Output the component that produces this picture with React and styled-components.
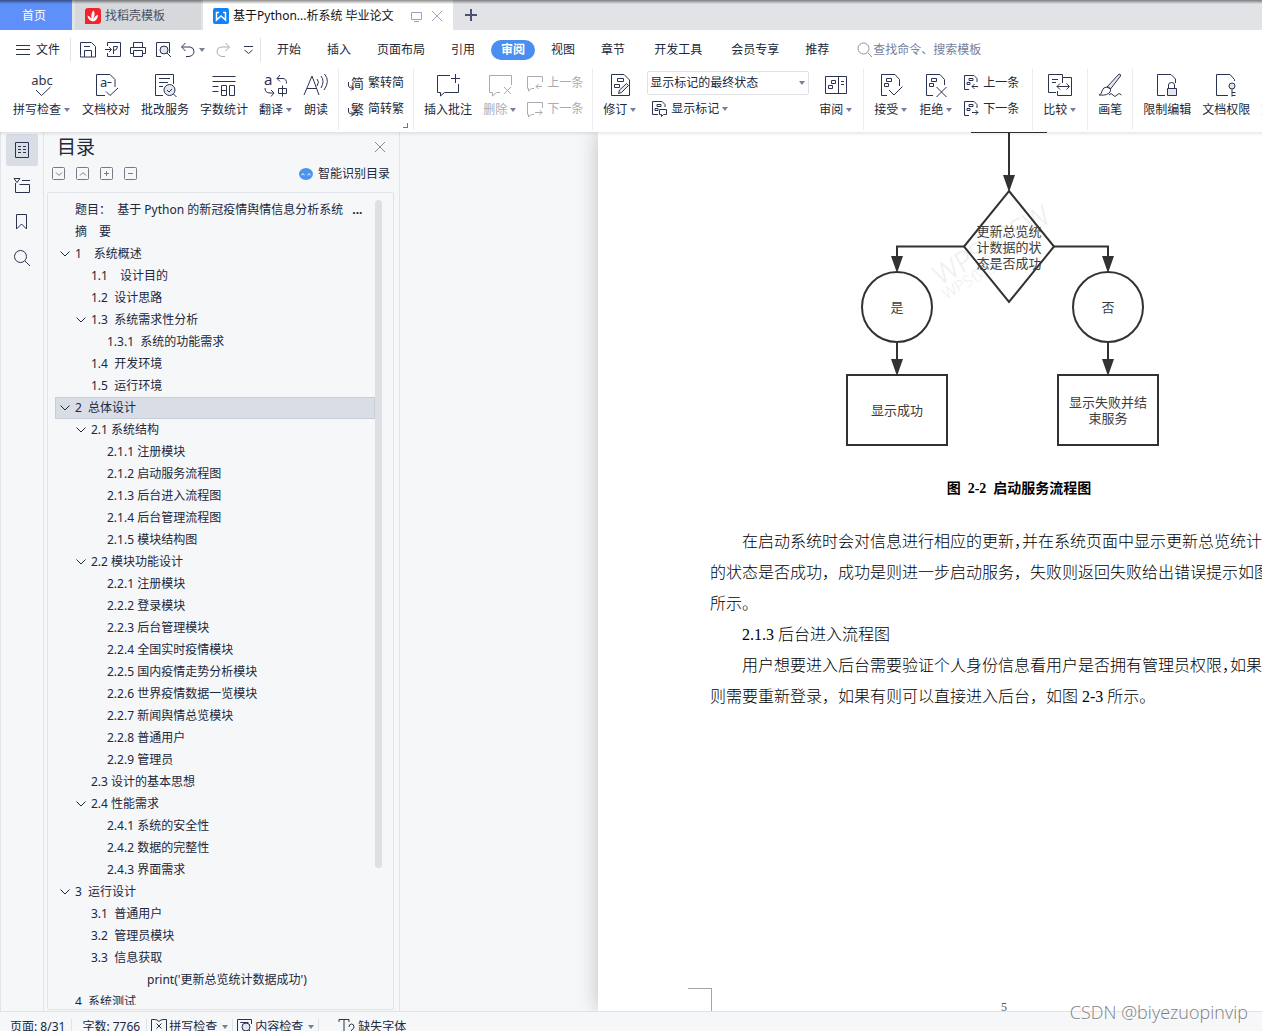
import React, { useState } from 'react';
import styled, { createGlobalStyle, css } from 'styled-components';

const INK = '#2b3350';
const MUTED = '#a9abb2';

const big = {
    spell: <>
        <path d="M6 17l5.500 5.500L20.500 14" />
        <text x="12" y="12" textAnchor="middle" fontSize="13" fill="currentColor" stroke="none">abc</text>
    </>,
    proof: <>
        <path d="M11 22.500H2.500V1.500H16l5 5V14M12 18.500l4 4 8-7.500" />
        <path d="M13.500 9.500h4" />
        <text x="6" y="14" fontSize="13" fill="currentColor" stroke="none">a</text>
    </>,
    correct: <>
        <path d="M10 22.500H2.500V1.500h18V11M6 5.500h11M6 9.500h9M6 13.500h4" />
        <circle cx="16.500" cy="17" r="5.500" fill="#e3e6ec" />
        <path d="M14 17l2 2 3-3M20.500 21l3 3" />
    </>,
    count: <>
        <path d="M.500 3.500h23M.500 8.500h23M.500 13.500h6M.500 18.500h6M9.500 12.500h5v10h-5zM17.500 12.500h5v10h-5zM9.500 17.500h5" />
    </>,
    translate: <>
        <text x="0" y="12" fontSize="15" fill="currentColor" stroke="none">a</text>
        <path d="M16 2l-3 3.500 3 3M13 5.500h6q3.500 0 3.500 5M1 15q0 5 5 5h3M7 17l3 3-3 3.500M14.500 15.500h8v5h-8zM18.500 12.500v11" />
    </>,
    read: <>
        <path d="M0 22L8 3l7 19M3 15.500h10M13 6q3 3 0 7M17 3q4 5 0 12M20.500 1q6 7-.500 16" />
    </>,
    comment: <>
        <path d="M14 2.500H1.500v17h3V23l4-3.500h14V11M19.500 1v9M15 5.500h9" />
    </>,
    remove: <>
        <path d="M12 19.500H8.500L4.500 23v-3.500h-3v-17h22V12M16 14l7 7M23 14l-7 7" />
    </>,
    revise: <>
        <path d="M3.500 1.500H16l5.500 5.500v15.500h-18z" />
        <path d="M9.500 5.500h6v3h-6zM6.500 11.500h5v3h-5z" />
        <path d="M10.500 20.500l1-3.500 7-6.500 2 2-7 7z" fill="#e3e6ec" />
    </>,
    pane: <>
        <path d="M1.500 3.500h21v17h-21zM14.500 3.500v17M17 8.500h3M17 11.500h3M7.500 7.500h4v3h-4zM4.500 12.500h4v3h-4z" />
    </>,
    accept: <>
        <path d="M8 22.500H2.500V1.500H16l4.500 5V13M7.500 5.500h5v3h-5zM5.500 10.500h4v3h-4zM10 17l5 5 8.500-8.500" />
    </>,
    reject: <>
        <path d="M9 22.500H2.500V1.500H16l4.500 5V12M7.500 5.500h5v3h-5zM5.500 10.500h4v3h-4zM12.500 14l10 10M22.500 14l-10 10" />
    </>,
    compare: <>
        <path d="M8 19.500H.500V1.500h14v3M4 6.500h6M4 9.500h4M14.500 8V4.500h9v18h-14V18M14.500 8v2M9 13.500h12M12 10.500l-3 3 3 3M18.500 10.500l3 3-3 3" />
    </>,
    pen: <>
        <path d="M9 14L21 1q2 0 1.500 2L12.500 16z" fill="#e3e6ec" />
        <path d="M9 14q4 0 3.500 4-2 5-11.500 4 3-1 3-4 1-4 5-4zM11 22q2-3 4 0t4 0 4.500 0" />
    </>,
    lock: <>
        <path d="M10 22.500H2.500V1.500H16l4.500 4.500v4M13.500 15v-3q0-2.500 3-2.500t3 2.500v3" />
        <path d="M12.500 15.500h9v7h-9z" fill="#e3e6ec" />
    </>,
    key: <>
        <path d="M14 22.500H2.500V1.500H16l4.500 5V8M18 16v7.500M18 19.500h3.500M18 22.500h3.500" />
        <circle cx="18" cy="13" r="3" fill="#e3e6ec" />
    </>,
};

const small = {
    save: <path d="M.500 13.500v-13h11l4 4v10.500H.500zM4.500 15V8.500h7V15M4 4.500h6" />,
    pdf: <path d="M2.500 4V.500h13v14h-13V11M0 7.500h6M4 5l2.500 2.500L4 10M8.500 12V4.500h4q0 4-4 4" />,
    print: <path d="M3.500 5V.500h9V5M3.500 11.500h-3v-6h15v6h-3M3.500 8.500h9v6h-9z" />,
    preview: <>
        <path d="M6 14.500H1.500V.500h13V11" />
        <circle cx="9" cy="8" r="4" fill="#e3e6ec" />
        <path d="M12 11l4 4" />
    </>,
    undo: <path d="M5.500 1L1.500 5l4 4M2 5h8q4 .500 4 4.500t-5 5H6" />,
    redo: <path d="M10.500 1l4 4-4 4M14 5H6Q2 5.500 2 9.500t5 5h3" />,
    more: <path d="M4 4.500h9M4.500 8l4 3.500 4-3.500" />,
    search: <path d="M6.500 1a5.500 5.500 0 1 0 0 11 5.500 5.500 0 1 0 0-11zM10.500 10.500L15 15" />,
    prev: <path d="M7 13.500H4.500L1.500 16v-2.500h-1v-12h15V7M15 11.500H9M11.500 9L9 11.500l2.500 2.500" />,
    next: <path d="M7 13.500H4.500L1.500 16v-2.500h-1v-12h15V7M8 11.500h7M12.500 9l2.500 2.500-2.500 2.500" />,
    prevMark: <path d="M6 14.500H1.500V.500H11l3 3V7M6 3.500h4v2H6zM4 7.500h3v2H4zM15 11.500H9M11.500 9L9 11.500l2.500 2.500" />,
    nextMark: <path d="M6 14.500H1.500V.500H11l3 3V7M6 3.500h4v2H6zM4 7.500h3v2H4zM9 11.500h6M12.500 9l2.500 2.500-2.500 2.500" />,
    marks: <path d="M7 13.500H1.500V.500H11l3 3V6M6 3.500h4v2H6zM4 7.500h3v2H4zM8.500 8.500h7v5h-3l-2 2v-2h-2z" />,
    outline: <path d="M1.500.500h13v15h-13zM4 4.500h3M9 4.500h3M4 7.500h3M9 7.500h3M4 10.500h3M9 10.500h3" />,
    chapters: <path d="M0 .500h6L3 4.500zM8 2.500h8M1.500 5v9.500h14v-8h-10" />,
    bookmark: <path d="M2.500.500h10V15L7.500 10l-5 5z" />,
    find: <path d="M6.500.500a6 6 0 1 0 0 12 6 6 0 1 0 0-12zM11 11l5 5" />,
    spellbook: <path d="M8 2.500q-2-2-4-2H.500v13h15V.500H12q-2 0-4 2M5.500 4.500l5 5M10.500 4.500l-5 5" />,
    content: <>
        <path d="M5 14.500H.500V.500h14V5M3.500 4V3.500h8" />
        <circle cx="9" cy="8" r="4" fill="#e3e6ec" />
        <path d="M12 11l3 3" />
    </>,
    missing: <path d="M0 .500h10M0 .500V3M10 .500V3M5 .500v13M3 13.500h4M10 8q0-3 2.500-3T15 8q0 2-2.500 3v1M12.500 13.500v1.500" />,
    screen: <path d="M2.500 4.500h10v7h-10zM5 13.500h5" />,
    close: <path d="M3 3l10 10M13 3L3 13" />,
};

function Icon({ name, size = 16 }) {
    const set = size === 24 ? big : small;
    return <Glyph width={size} height={size} viewBox={`0 0 ${size} ${size}`} aria-hidden="true">{set[name]}</Glyph>;
}

function Caret() {
    return <CaretSvg width="6" height="4" viewBox="0 0 6 4" aria-hidden="true"><path d="M0 0h6L3 4z" /></CaretSvg>;
}

function Tool({ icon, label, caret, disabled }) {
    return (
        <BigButton disabled={disabled}>
            <Icon name={icon} size={24} />
            <Label>{label}{caret && <Caret />}</Label>
        </BigButton>
    );
}

function Mini({ icon, label, caret, disabled, glyph }) {
    return (
        <MiniButton disabled={disabled}>
            {glyph
                ? <GlyphBox><ConvertArrow viewBox="0 0 6 9" width="6" height="9"><path d="M.500 0v4q0 2 4 2M3 3.500L5.500 6 3 8.500" /></ConvertArrow><b>{glyph}</b></GlyphBox>
                : <Icon name={icon} />}
            <Label>{label}{caret && <Caret />}</Label>
        </MiniButton>
    );
}

const toc = [
    [0, '题目：  基于 Python 的新冠疫情舆情信息分析系统', false, '...'],
    [0, '摘　要'],
    [0, '1　系统概述', true],
    [1, '1.1　设计目的'],
    [1, '1.2  设计思路'],
    [1, '1.3  系统需求性分析', true],
    [2, '1.3.1  系统的功能需求'],
    [1, '1.4  开发环境'],
    [1, '1.5  运行环境'],
    [0, '2  总体设计', true],
    [1, '2.1 系统结构', true],
    [2, '2.1.1 注册模块'],
    [2, '2.1.2 启动服务流程图'],
    [2, '2.1.3 后台进入流程图'],
    [2, '2.1.4 后台管理流程图'],
    [2, '2.1.5 模块结构图'],
    [1, '2.2 模块功能设计', true],
    [2, '2.2.1 注册模块'],
    [2, '2.2.2 登录模块'],
    [2, '2.2.3 后台管理模块'],
    [2, '2.2.4 全国实时疫情模块'],
    [2, '2.2.5 国内疫情走势分析模块'],
    [2, '2.2.6 世界疫情数据一览模块'],
    [2, '2.2.7 新闻舆情总览模块'],
    [2, '2.2.8 普通用户'],
    [2, '2.2.9 管理员'],
    [1, '2.3 设计的基本思想'],
    [1, '2.4 性能需求', true],
    [2, '2.4.1 系统的安全性'],
    [2, '2.4.2 数据的完整性'],
    [2, '2.4.3 界面需求'],
    [0, '3  运行设计', true],
    [1, '3.1  普通用户'],
    [1, '3.2  管理员模块'],
    [1, '3.3  信息获取'],
    [4.5, "print('更新总览统计数据成功')"],
    [0, '4  系统测试'],
];

const menu = ['开始', '插入', '页面布局', '引用', '审阅', '视图', '章节', '开发工具', '会员专享', '推荐'];
const pluginTabs = ['开发工具', '会员专享'];

function FlowChart() {
    return (
        <Chart width="314" height="316" viewBox="0 0 314 316" role="img" aria-label="启动服务流程图">
            <g className="mark">
                <text transform="translate(94 154) rotate(-30)" fontSize="28">WPS VIEW</text>
                <text transform="translate(100 168) rotate(-30)" fontSize="16">WPS仅供</text>
            </g>
            <g className="shape">
                <path d="M125 0h76M163 0v44M118 114.500H51V126M208 114.500h54V126M51 211v18M262 211v18" />
                <path d="M163 59l45 55.500-45 55.500-45-55.500z" />
                <circle cx="51" cy="175" r="35" />
                <circle cx="262" cy="175" r="35" />
                <path d="M1 243h100v70H1zM212 243h100v70H212z" />
            </g>
            <path className="head" d="M157 43h12l-6 17zM45 124h12l-6 17zM256 124h12l-6 17zM45 227h12l-6 17zM256 227h12l-6 17z" />
            <g className="words">
                <text x="163" y="104">更新总览统</text>
                <text x="163" y="120">计数据的状</text>
                <text x="163" y="136">态是否成功</text>
                <text x="51" y="180">是</text>
                <text x="262" y="180">否</text>
                <text x="51" y="283">显示成功</text>
                <text x="262" y="275">显示失败并结</text>
                <text x="262" y="291">束服务</text>
            </g>
        </Chart>
    );
}

export default function App() {
    const [tab, setTab] = useState('审阅');
    const [selected, setSelected] = useState(9);

    return (
        <>
            <GlobalStyle />
            <Window>
                <TabBar>
                    <HomeTab>首页</HomeTab>
                    <DocTab $width={126}>
                        <svg width="16" height="16" viewBox="0 0 16 16" aria-hidden="true">
                            <path d="M3 0h10q3 0 3 3v10q0 3-3 3H0V3q0-3 3-3z" fill="#f5222d" />
                            <path d="M8 13.500Q3 12.500 2.500 7.500 5 8 6.500 11 5.500 5 8.500 2.500q2.500 3-.500 8.500Q10 7.500 13 6.500 13 12.500 8 13.500z" fill="#fff" />
                        </svg>
                        找稻壳模板
                    </DocTab>
                    <DocTab $width={250} $active>
                        <svg width="16" height="16" viewBox="0 0 16 16" aria-hidden="true">
                            <rect width="16" height="16" rx="2" fill="#1283f7" />
                            <path d="M3.500 4v8L8 8l4.500 4V4M3 4.500h3M10 4.500h3" fill="none" stroke="#fff" strokeWidth="1.500" />
                        </svg>
                        <span>基于Python...析系统 毕业论文</span>
                        <TabTools>
                            <Icon name="screen" />
                            <Icon name="close" />
                        </TabTools>
                    </DocTab>
                    <NewTab aria-label="新建">
                        <svg width="12" height="12" viewBox="0 0 12 12"><path d="M6 0v12M0 6h12" stroke="#4a5470" strokeWidth="2" /></svg>
                    </NewTab>
                </TabBar>

                <MenuRow>
                    <FileButton>
                        <svg width="14" height="12" viewBox="0 0 14 12"><path d="M0 1.500h14M0 5.500h14M0 10.500h14" stroke={INK} /></svg>
                        文件
                    </FileButton>
                    <QuickTools>
                        <button aria-label="保存"><Icon name="save" /></button>
                        <button aria-label="输出为PDF"><Icon name="pdf" /></button>
                        <button aria-label="打印"><Icon name="print" /></button>
                        <button aria-label="打印预览"><Icon name="preview" /></button>
                        <button aria-label="撤销"><Icon name="undo" /><Caret /></button>
                        <button aria-label="恢复" disabled><Icon name="redo" /></button>
                        <button aria-label="更多"><Icon name="more" /></button>
                    </QuickTools>
                    <MenuTabs>
                        {menu.map(name => (
                            <MenuTab
                                key={name}
                                $active={name === tab}
                                $plugin={pluginTabs.includes(name)}
                                onClick={() => setTab(name)}
                            >{name}</MenuTab>
                        ))}
                    </MenuTabs>
                    <SearchBox>
                        <Icon name="search" />
                        <input aria-label="搜索" placeholder="查找命令、搜索模板" />
                    </SearchBox>
                </MenuRow>

                <Ribbon>
                    <Group $first>
                        <Tool icon="spell" label="拼写检查" caret />
                        <Tool icon="proof" label="文档校对" />
                        <Tool icon="correct" label="批改服务" />
                        <Tool icon="count" label="字数统计" />
                        <Tool icon="translate" label="翻译" caret />
                        <Tool icon="read" label="朗读" />
                    </Group>
                    <Group>
                        <MiniColumn>
                            <Mini glyph="简" label="繁转简" />
                            <Mini glyph="繁" label="简转繁" />
                        </MiniColumn>
                        <Launcher />
                    </Group>
                    <Group>
                        <Tool icon="comment" label="插入批注" />
                        <Tool icon="remove" label="删除" caret disabled />
                        <MiniColumn>
                            <Mini icon="prev" label="上一条" disabled />
                            <Mini icon="next" label="下一条" disabled />
                        </MiniColumn>
                    </Group>
                    <Group>
                        <Tool icon="revise" label="修订" caret />
                        <MiniColumn>
                            <SelectWrap>
                                <select aria-label="标记显示状态" defaultValue="final">
                                    <option value="final">显示标记的最终状态</option>
                                    <option value="clean">最终状态</option>
                                </select>
                                <Caret />
                            </SelectWrap>
                            <MiniIndent><Mini icon="marks" label="显示标记" caret /></MiniIndent>
                        </MiniColumn>
                        <Tool icon="pane" label="审阅" caret />
                    </Group>
                    <Group $wide>
                        <Tool icon="accept" label="接受" caret />
                        <Tool icon="reject" label="拒绝" caret />
                        <MiniColumn>
                            <Mini icon="prevMark" label="上一条" />
                            <Mini icon="nextMark" label="下一条" />
                        </MiniColumn>
                    </Group>
                    <Group>
                        <Tool icon="compare" label="比较" caret />
                    </Group>
                    <Group>
                        <Tool icon="pen" label="画笔" />
                    </Group>
                    <Group>
                        <Tool icon="lock" label="限制编辑" />
                        <Tool icon="key" label="文档权限" />
                        <Tool label="文档认证" />
                    </Group>
                </Ribbon>

                <Body>
                    <Rail>
                        <RailButton $active aria-label="目录"><Icon name="outline" /></RailButton>
                        <RailButton aria-label="章节"><Icon name="chapters" /></RailButton>
                        <RailButton aria-label="书签"><Icon name="bookmark" /></RailButton>
                        <RailButton aria-label="查找"><Icon name="find" /></RailButton>
                    </Rail>

                    <Side>
                        <SideHead>
                            <h2>目录</h2>
                            <button aria-label="关闭"><Icon name="close" /></button>
                        </SideHead>
                        <SideTools>
                            {['M4 5.500l3 3 3-3', 'M4 8.500l3-3 3 3', 'M4 6.500h5M6.500 4v5', 'M4 6.500h5'].map(d => (
                                <button key={d} aria-label="层级">
                                    <svg width="14" height="14" viewBox="0 0 14 14"><path d={`M.500 1.500q0-1 1-1h10q1 0 1 1v10q0 1-1 1h-10q-1 0-1-1z${d}`} /></svg>
                                </button>
                            ))}
                            <SmartLink href="#toc">
                                <svg width="14" height="12" viewBox="0 0 14 12">
                                    <ellipse cx="7" cy="6" rx="7" ry="6" fill="#4a96ef" />
                                    <path d="M2.500 7q1.500-2.500 3 0M8.500 7q1.500-2.500 3 0" fill="none" stroke="#fff" />
                                </svg>
                                智能识别目录
                            </SmartLink>
                        </SideTools>
                        <TocBox id="toc">
                            <TocList>
                                {toc.map(([level, text, open, more], i) => (
                                    <li key={text}>
                                        <TocRow $level={level} $active={i === selected} onClick={() => setSelected(i)}>
                                            <Twist>{open && <svg width="10" height="6" viewBox="0 0 10 6"><path d="M.500 .500L5 5 9.500.500" /></svg>}</Twist>
                                            {text}
                                            {more && <b>{more}</b>}
                                        </TocRow>
                                    </li>
                                ))}
                            </TocList>
                            <ScrollThumb />
                        </TocBox>
                    </Side>

                    <Canvas>
                        <Page>
                            <FlowChart />
                            <Caption>图&nbsp; 2-2&nbsp; 启动服务流程图</Caption>
                            <Text>
                                在启动系统时会对信息进行相应的更新<Half>，</Half>并在系统页面中显示更新总览统计<br />
                                的状态是否成功，成功是则进一步启动服务，失败则返回失败给出错误提示如图<br />
                                所示。
                            </Text>
                            <Text>2.1.3 后台进入流程图</Text>
                            <Text>
                                用户想要进入后台需要验证个人身份信息看用户是否拥有管理员权限<Half>，</Half>如果<br />
                                则需要重新登录，如果有则可以直接进入后台，如图 2-3 所示。
                            </Text>
                            <PageFoot>
                                <Corner />
                                <span>5</span>
                            </PageFoot>
                        </Page>
                    </Canvas>
                </Body>

                <StatusBar>
                    <Status>页面: 8/31</Status>
                    <Status>字数: 7766</Status>
                    <Status as="button" $tight><Icon name="spellbook" />拼写检查<Caret /></Status>
                    <Status as="button" $tight><Icon name="content" />内容检查<Caret /></Status>
                    <Status as="button" $last><Icon name="missing" />缺失字体</Status>
                </StatusBar>
                <Credit>CSDN @biyezuopinvip</Credit>
            </Window>
        </>
    );
}

const GlobalStyle = createGlobalStyle`
    * { box-sizing: border-box; }
    body {
        margin: 0;
        color: #20283c;
        font: 12px/16px "Noto Sans", "Noto Sans CJK SC", sans-serif;
    }
    button {
        padding: 0;
        border: 0;
        background: none;
        color: inherit;
        font: inherit;
        white-space: nowrap;
    }
    a { color: inherit; text-decoration: none; }
`;
const Window = styled.div`
    position: relative;
    display: flex;
    flex-direction: column;
    height: 100vh;
    overflow: hidden;
    background: #fff;
`;
const Glyph = styled.svg`
    flex: none;
    display: block;
    fill: none;
    stroke: currentColor;
    color: ${INK};
    overflow: visible;
    button:disabled & { color: ${MUTED}; }
`;
const CaretSvg = styled.svg`
    flex: none;
    margin: 0 1px 0 3px;
    fill: #77809a;
`;

const TabBar = styled.header`
    position: relative;
    display: flex;
    flex: none;
    height: 30px;
    background: #e1e3e7;
    &::after {
        content: '';
        position: absolute;
        inset: 0 0 auto;
        height: 4px;
        background: linear-gradient(rgba(0, 0, 0, .45), rgba(0, 0, 0, 0));
    }
`;
const HomeTab = styled.button`
    width: 72px;
    margin-right: 3px;
    padding: 1px 4px 0 0;
    background: #5f8ff9;
    color: #fff;
`;
const DocTab = styled.div`
    display: flex;
    align-items: center;
    gap: 4px;
    width: ${p => p.$width}px;
    margin-right: ${p => p.$active ? 0 : 2}px;
    padding: 1px 8px 0 10px;
    background: ${p => p.$active ? '#fff' : '#d6d8dc'};
    color: ${p => p.$active ? '#111' : '#4a5060'};
    white-space: nowrap;
`;
const TabTools = styled.div`
    display: flex;
    gap: 4px;
    margin-left: auto;
    ${Glyph} { color: #98a2b8; }
`;
const NewTab = styled.button`
    display: flex;
    align-items: center;
    padding: 0 12px;
`;

const MenuRow = styled.nav`
    display: flex;
    align-items: center;
    flex: none;
    height: 39px;
`;
const FileButton = styled.button`
    display: flex;
    align-items: center;
    gap: 6px;
    height: 24px;
    padding: 0 10px 0 16px;
    border-right: 1px solid #e1e3e7;
`;
const QuickTools = styled.div`
    display: flex;
    align-items: center;
    gap: 9px;
    height: 24px;
    padding: 0 4px 0 9px;
    border-right: 1px solid #e1e3e7;
    button { display: flex; align-items: center; }
`;
const MenuTabs = styled.div`
    display: flex;
    gap: 6px;
    padding: 0 18px 0 6px;
`;
const MenuTab = styled.button`
    height: 20px;
    margin-left: ${p => p.$plugin ? 3 : 0}px;
    padding: 0 10px;
    border-radius: 10px;
    ${p => p.$active && css`
        background: #4a8ff0;
        color: #fff;
        font-weight: 700;
    `}
`;
const SearchBox = styled.label`
    display: flex;
    align-items: center;
    flex: 1;
    ${Glyph} { color: #8b93a8; }
    input {
        flex: 1;
        min-width: 0;
        padding: 0;
        border: 0;
        outline: 0;
        font: inherit;
        &::placeholder { color: #75809a; }
    }
`;

const Ribbon = styled.div`
    display: flex;
    flex: none;
    height: 63px;
    overflow: hidden;
    background: #fff;
`;
const Group = styled.div`
    position: relative;
    display: flex;
    align-items: flex-start;
    flex: none;
    gap: 11px;
    height: 61px;
    padding: 2px ${p => p.$wide ? 14 : 10}px 0 ${p => p.$first ? 13 : 10}px;
    border-right: 1px solid #ececef;
`;
const BigButton = styled.button`
    display: flex;
    flex-direction: column;
    align-items: center;
    gap: 5px;
    padding-top: 2px;
    &:disabled { color: ${MUTED}; }
`;
const Label = styled.span`
    display: flex;
    align-items: center;
`;
const MiniColumn = styled.div`
    display: flex;
    flex-direction: column;
    gap: 2px;
    margin: 0 -1px;
`;
const MiniButton = styled.button`
    display: flex;
    align-items: center;
    gap: 4px;
    height: 24px;
    &:disabled { color: ${MUTED}; }
`;
const MiniIndent = styled.div`
    padding-left: 4px;
`;
const GlyphBox = styled.span`
    display: flex;
    align-items: center;
    width: 16px;
    b { font-weight: 400; font-size: 13px; margin-left: -3px; }
`;
const ConvertArrow = styled.svg`
    flex: none;
    align-self: flex-end;
    fill: none;
    stroke: ${INK};
`;
const Launcher = styled.span`
    position: absolute;
    right: 5px;
    bottom: 2px;
    width: 5px;
    height: 5px;
    border: solid #6d7690;
    border-width: 0 1px 1px 0;
`;
const SelectWrap = styled.div`
    position: relative;
    select {
        display: block;
        width: 162px;
        height: 24px;
        padding: 0 16px 0 2px;
        border: 1px solid #dfe1e6;
        border-radius: 2px;
        appearance: none;
        background: #fff;
        color: inherit;
        font: inherit;
    }
    ${CaretSvg} {
        position: absolute;
        top: 10px;
        right: 3px;
    }
`;

const Body = styled.main`
    display: flex;
    flex: 1;
    min-height: 0;
    background: #f6f7f9;
    position: relative;
    &::before {
        content: '';
        position: absolute;
        z-index: 1;
        inset: 0 0 auto;
        height: 4px;
        background: linear-gradient(rgba(0, 0, 0, .09), rgba(0, 0, 0, 0));
    }
`;
const Rail = styled.aside`
    display: flex;
    flex-direction: column;
    align-items: center;
    gap: 4px;
    flex: none;
    width: 44px;
    padding-top: 2px;
    border: solid #e1e4e9;
    border-width: 0 1px;
`;
const RailButton = styled.button`
    display: grid;
    place-items: center;
    width: 32px;
    height: 32px;
    border-radius: 2px;
    background: ${p => p.$active ? '#d9dee6' : 'none'};
`;
const Side = styled.section`
    display: flex;
    flex-direction: column;
    flex: none;
    width: 356px;
    padding: 2px 5px 1px 3px;
    border-right: 1px solid #e1e4e9;
`;
const SideHead = styled.div`
    display: flex;
    align-items: center;
    justify-content: space-between;
    padding: 0 6px 0 10px;
    h2 {
        margin: 0;
        font-size: 19px;
        font-weight: 400;
        line-height: 26px;
    }
    ${Glyph} { color: #858b99; }
`;
const SideTools = styled.div`
    display: flex;
    align-items: center;
    gap: 10px;
    height: 28px;
    padding: 0 4px 0 5px;
    button { display: flex; }
    button svg { fill: none; stroke: #767b88; }
`;
const SmartLink = styled.a`
    display: flex;
    align-items: center;
    gap: 5px;
    margin-left: auto;
`;
const TocBox = styled.div`
    display: flex;
    align-items: flex-start;
    flex: 1;
    min-height: 0;
    margin-top: 4px;
    padding: 6px 11px 4px 7px;
    border: 1px solid #e1e4e9;
    border-radius: 2px;
`;
const TocList = styled.ul`
    flex: 1;
    align-self: stretch;
    overflow: hidden;
    margin: 0;
    padding: 0;
    list-style: none;
`;
const TocRow = styled.button`
    display: flex;
    align-items: center;
    width: 100%;
    height: 22px;
    padding-left: ${p => 5 + p.$level * 16}px;
    white-space: pre;
    ${p => p.$active && css`
        background: #d9dee6;
        outline: 1px solid #c8ced8;
        outline-offset: -1px;
    `}
    b { margin-left: 9px; }
`;
const Twist = styled.span`
    display: flex;
    width: 15px;
    svg { fill: none; stroke: #20283c; }
`;
const ScrollThumb = styled.div`
    width: 7px;
    height: 668px;
    max-height: 100%;
    margin-top: 1px;
    border-radius: 4px;
    background: #dddfe2;
`;

const Canvas = styled.section`
    flex: 1;
    min-width: 0;
    overflow: hidden;
    padding-left: 198px;
`;
const Page = styled.article`
    display: flex;
    flex-direction: column;
    width: 810px;
    height: 100%;
    padding: 0 112px;
    background: #fff;
    box-shadow: 0 0 20px rgba(0, 0, 0, .22);
    color: #000;
    font-family: "Liberation Serif", "Noto Sans CJK SC", serif;
`;
const Chart = styled.svg`
    flex: none;
    align-self: center;
    font-family: "Noto Sans", "Noto Sans CJK SC", sans-serif;
    .shape { fill: none; stroke: #323232; stroke-width: 2; }
    .head { fill: #323232; }
    .words { fill: #3c3c3c; font-size: 13px; text-anchor: middle; }
    .mark { fill: #efefef; font-weight: 300; }
`;
const Caption = styled.p`
    margin: 31px 0 27px;
    text-indent: 32px;
    text-align: center;
    font-size: 14px;
    font-weight: 700;
    line-height: 20px;
`;
const Text = styled.p`
    margin: 0;
    text-indent: 32px;
    font-size: 16px;
    font-weight: 300;
    line-height: 31px;
    white-space: nowrap;
`;
const Half = styled.span`
    font-feature-settings: "halt";
`;
const PageFoot = styled.footer`
    display: flex;
    height: 23px;
    margin-top: auto;
    margin-left: -22px;
    span {
        flex: 1;
        padding-top: 11px;
        text-align: center;
        color: #555;
    }
`;
const Corner = styled.div`
    width: 24px;
    height: 23px;
    border: solid #a5a5a5;
    border-width: 1px 1px 0 0;
`;

const StatusBar = styled.footer`
    display: flex;
    align-items: flex-start;
    flex: none;
    height: 20px;
    padding-top: 7px;
    overflow: hidden;
    border-top: 1px solid #dfe2e7;
    background: #f6f7f9;
`;
const Status = styled.div`
    display: flex;
    align-items: center;
    gap: ${p => p.$tight ? 2 : 3}px;
    padding: 0 ${p => p.$tight ? 4 : 6}px 0 ${p => p.$tight ? 4 : p.$last ? 20 : 10}px;
    border-right: ${p => p.$last ? 0 : 1}px solid #dfe2e7;
    ${CaretSvg} { margin: 0 0 0 3px; }
`;
const Credit = styled.div`
    position: absolute;
    right: 14px;
    bottom: 8px;
    color: #7d7f84;
    font: 18px/22px "Open Sans", sans-serif;
    font-weight: 300;
    text-shadow: 1px 1px 0 #fff;
`;
